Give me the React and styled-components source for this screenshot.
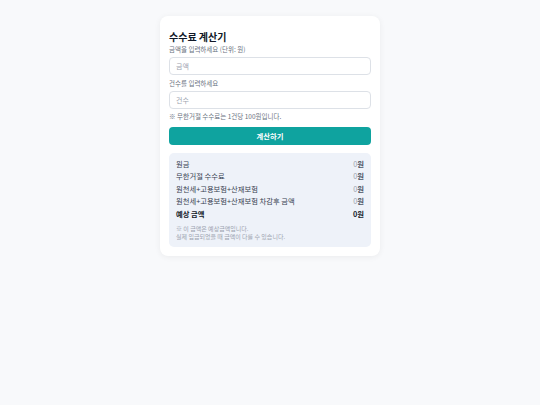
import React, { useState } from "react";
import styled, { createGlobalStyle } from "styled-components";

const GlobalStyle = createGlobalStyle`
  html, body {
    margin: 0;
    padding: 0;
    background: #f8f9fb;
    font-family: "Noto Sans CJK KR", "Noto Sans", sans-serif;
    color: #1f2937;
  }
`;

const Page = styled.div`
  width: 540px;
  min-height: 405px;
  display: flex;
  justify-content: center;
  align-items: flex-start;
  padding-top: 16px;
  box-sizing: border-box;
`;

const Card = styled.div`
  width: 220px;
  box-sizing: border-box;
  background: #ffffff;
  border-radius: 8px;
  box-shadow: 0 1px 6px rgba(0, 0, 0, 0.06);
  padding: 13px 9px 9px;
  display: flex;
  flex-direction: column;
`;

const Title = styled.h1`
  margin: 0;
  font-size: 10px;
  line-height: 16px;
  font-weight: 700;
  color: #111827;
`;

const Label = styled.label`
  font-size: 6.5px;
  line-height: 9px;
  color: #6b7280;
  margin-bottom: 3px;
`;

const Input = styled.input`
  height: 18px;
  box-sizing: border-box;
  border: 1px solid #dde1e7;
  border-radius: 4px;
  padding: 0 6px;
  font-size: 7px;
  font-family: inherit;
  color: #374151;
  margin-bottom: 3.5px;
  outline: none;
  &::placeholder {
    color: #9ca3af;
  }
`;

const Note = styled.p`
  margin: 0 0 5.5px;
  font-size: 6.5px;
  line-height: 9px;
  color: #6b7280;
`;

const Button = styled.button`
  height: 18px;
  border: none;
  border-radius: 4px;
  background: #0fa39f;
  color: #ffffff;
  font-family: inherit;
  font-size: 7.3px;
  font-weight: 700;
  cursor: pointer;
  margin-bottom: 8px;
  padding: 0;
`;

const ResultBox = styled.div`
  background: #eef2f9;
  border-radius: 5px;
  padding: 5px 7px 6px;
  display: flex;
  flex-direction: column;
`;

const Row = styled.div`
  display: flex;
  justify-content: space-between;
  align-items: center;
  height: 12.5px;
  font-size: 7.3px;
  color: ${(p) => (p.$bold ? "#111827" : "#374151")};
  font-weight: ${(p) => (p.$bold ? 700 : 400)};
`;

const Value = styled.span`
  color: ${(p) => (p.$bold ? "#111827" : "#9ca3af")};
  b {
    font-weight: 700;
    color: ${(p) => (p.$bold ? "#111827" : "#4b5563")};
  }
`;

const Footnote = styled.p`
  margin: 5px 0 0;
  font-size: 6px;
  line-height: 8px;
  color: #9ca3af;
`;

const rows = [
  { label: "원금" },
  { label: "무한거절 수수료" },
  { label: "원천세+고용보험+산재보험" },
  { label: "원천세+고용보험+산재보험 차감후 금액" },
  { label: "예상 금액", bold: true },
];

export default function App() {
  const [amount, setAmount] = useState("");
  const [count, setCount] = useState("");
  return (
    <>
      <GlobalStyle />
      <Page>
        <Card>
          <Title>수수료 계산기</Title>
          <Label>금액을 입력하세요 (단위: 원)</Label>
          <Input
            placeholder="금액"
            value={amount}
            onChange={(e) => setAmount(e.target.value)}
          />
          <Label>건수를 입력하세요</Label>
          <Input
            placeholder="건수"
            value={count}
            onChange={(e) => setCount(e.target.value)}
          />
          <Note>※ 무한거절 수수료는 1건당 100원입니다.</Note>
          <Button>계산하기</Button>
          <ResultBox>
            {rows.map((r) => (
              <Row key={r.label} $bold={r.bold}>
                <span>{r.label}</span>
                <Value $bold={r.bold}>
                  0<b>원</b>
                </Value>
              </Row>
            ))}
            <Footnote>
              ※ 이 금액은 예상금액입니다.
              <br />
              실제 입금되었을 때 금액이 다를 수 있습니다.
            </Footnote>
          </ResultBox>
        </Card>
      </Page>
    </>
  );
}
